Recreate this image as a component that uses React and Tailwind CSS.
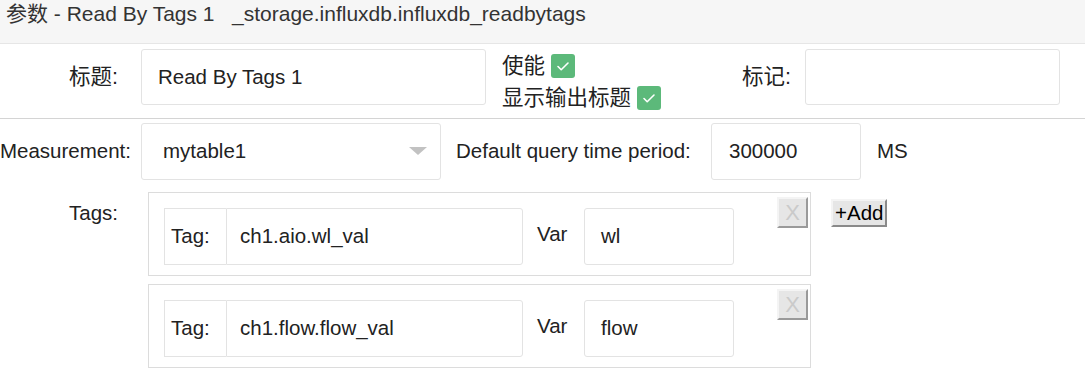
import React from "react";

const font = { fontFamily: '"Liberation Sans", Arial, "Noto Sans CJK SC", sans-serif' };

const Check = () => (
  <span className="inline-flex w-[24px] h-[24px] rounded-[3px] bg-[#5cb97a] items-center justify-center ml-[6px]">
    <svg width="16" height="16" viewBox="0 0 16 16" fill="none">
      <path d="M3 8.5l3.2 3.2L13 5" stroke="white" strokeWidth="1.6" strokeLinecap="round" strokeLinejoin="round" />
    </svg>
  </span>
);

const TagRow = ({ tag, v }) => (
  <div className="relative border border-[#dcdcdc] w-[663px] h-[84px] pt-[15px] pl-[15px] flex items-start">
    <div className="flex items-center h-[57px] w-[359px]">
      <div className="h-full w-[62px] border border-r-0 border-[#e3e3e3] flex items-center pl-[6px]">Tag:</div>
      <div className="h-full flex-1 border border-[#e3e3e3] rounded-r-[3px] flex items-center pl-[13px]">{tag}</div>
    </div>
    <div className="h-[57px] w-[61px] flex items-center pl-[14px] -mt-[2px]">Var</div>
    <div className="h-[57px] w-[150px] border border-[#e3e3e3] rounded-[3px] flex items-center pl-[16px]">{v}</div>
    <button className="absolute top-[4px] right-[2px] w-[31px] h-[31px] bg-[#e6e6e6] border-2 border-t-[#f4f4f4] border-l-[#f4f4f4] border-b-[#9a9a9a] border-r-[#9a9a9a] text-[#cacaca] text-[22px] leading-none flex items-center justify-center">
      X
    </button>
  </div>
);

export default function App() {
  return (
    <div className="w-[1085px] h-[382px] bg-white text-[20.5px] text-[#222] overflow-hidden" style={font}>
      <div className="h-[44px] bg-[#f6f6f6] border-b border-[#e6e6e6] pl-[6px] text-[21px] leading-[28px] text-[#333] whitespace-pre">
        参数 - Read By Tags 1   _storage.influxdb.influxdb_readbytags
      </div>

      <div className="h-[75px] border-b border-[#d4d4d4] flex items-start pt-[5px] text-[21.5px]">
        <div className="w-[118px] h-[56px] flex items-center justify-end">标题:</div>
        <div className="ml-[23px] w-[345px] h-[56px] border border-[#e3e3e3] rounded-[3px] flex items-center pl-[16px] text-[20.5px]">
          Read By Tags 1
        </div>
        <div className="ml-[16px] w-[179px] flex flex-col mt-[3px]">
          <div className="flex items-center h-[28px]">使能<Check /></div>
          <div className="flex items-center h-[36px]">显示输出标题<Check /></div>
        </div>
        <div className="w-[110px] h-[56px] flex items-center justify-end">标记:</div>
        <div className="ml-[14px] w-[255px] h-[56px] border border-[#e3e3e3] rounded-[3px]"></div>
      </div>

      <div className="flex items-start pt-[4px] h-[70px]">
        <div className="w-[131px] h-[57px] flex items-center justify-end">Measurement:</div>
        <div className="ml-[10px] w-[300px] h-[57px] border border-[#e3e3e3] rounded-[3px] flex items-center pl-[21px] pr-[13px] justify-between">
          <span>mytable1</span>
          <svg width="18" height="9" viewBox="0 0 18 9"><path d="M0 0h18L9 8z" fill="#c2c2c2" /></svg>
        </div>
        <div className="ml-[15px] w-[255px] h-[57px] flex items-center">Default query time period:</div>
        <div className="w-[150px] h-[57px] border border-[#e3e3e3] rounded-[3px] flex items-center pl-[17px]">300000</div>
        <div className="ml-[16px] h-[57px] flex items-center">MS</div>
      </div>

      <div className="flex items-start pt-[3px]">
        <div className="w-[118px] text-right pt-[6px]">Tags:</div>
        <div className="ml-[30px] flex flex-col gap-[8px]">
          <TagRow tag="ch1.aio.wl_val" v="wl" />
          <TagRow tag="ch1.flow.flow_val" v="flow" />
        </div>
        <button className="ml-[20px] mt-[7px] h-[28px] px-[2px] bg-[#e6e6e6] border-2 border-t-[#f4f4f4] border-l-[#f4f4f4] border-b-[#8a8a8a] border-r-[#8a8a8a] text-[20.5px] leading-none text-black">
          +Add
        </button>
      </div>
    </div>
  );
}
